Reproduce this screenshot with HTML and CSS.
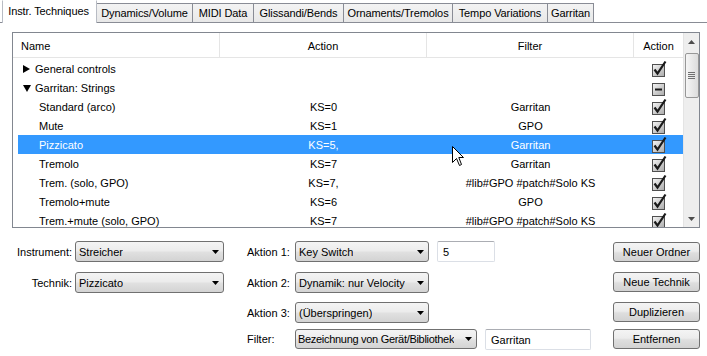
FILE: index.html
```html
<!DOCTYPE html>
<html>
<head>
<meta charset="utf-8">
<link rel="stylesheet" href="styles.css">
</head>
<body>
<svg class="defs" width="0" height="0">
  <defs>
    <linearGradient id="boxg" x1="0" y1="0" x2="1" y2="1">
      <stop offset="0" stop-color="#f6f6f6"/>
      <stop offset="1" stop-color="#a9a9a9"/>
    </linearGradient>
    <symbol id="chk" viewBox="0 0 15 17">
      <rect x="0.5" y="4.5" width="12" height="12" fill="url(#boxg)" stroke="#505050"/>
      <path d="M2.5 9.5 L5.5 13.5 L13.5 1.5" fill="none" stroke="#1a1a1a" stroke-width="2.2"/>
    </symbol>
    <symbol id="mix" viewBox="0 0 15 17">
      <rect x="0.5" y="4.5" width="12" height="12" fill="url(#boxg)" stroke="#505050"/>
      <rect x="3" y="9.5" width="7" height="2" fill="#1a1a1a"/>
    </symbol>
    <symbol id="drop" viewBox="0 0 7 4">
      <path d="M0 0 H7 L3.5 4 Z" fill="#000"/>
    </symbol>
  </defs>
</svg>

<div class="tabs">
  <div class="tab active t-instr">Instr. Techniques</div>
  <div class="tab t-dyn">Dynamics/Volume</div>
  <div class="tab t-midi">MIDI Data</div>
  <div class="tab t-gliss">Glissandi/Bends</div>
  <div class="tab t-orn">Ornaments/Tremolos</div>
  <div class="tab t-tempo">Tempo Variations</div>
  <div class="tab t-garr">Garritan</div>
</div>

<div class="list">
  <div class="table">
    <div class="head">
      <div class="hc name">Name</div>
      <div class="hc">Action</div>
      <div class="hc">Filter</div>
      <div class="hc last">Action</div>
    </div>
    <div class="rows">
      <div class="row group">
        <div class="nm"><svg class="tri" width="8" height="8" viewBox="0 0 8 8"><path d="M0 0 L7 4 L0 8 Z" fill="#000"/></svg>General controls</div>
        <div></div><div></div>
        <div class="ck"><svg width="15" height="17"><use href="#chk"/></svg></div>
      </div>
      <div class="row group">
        <div class="nm"><svg class="tri" width="8" height="8" viewBox="0 0 8 8"><path d="M0 1 L8 1 L4 8 Z" fill="#000"/></svg>Garritan: Strings</div>
        <div></div><div></div>
        <div class="ck"><svg width="15" height="17"><use href="#mix"/></svg></div>
      </div>
      <div class="row">
        <div class="nm">Standard (arco)</div><div>KS=0</div><div>Garritan</div>
        <div class="ck"><svg width="15" height="17"><use href="#chk"/></svg></div>
      </div>
      <div class="row">
        <div class="nm">Mute</div><div>KS=1</div><div>GPO</div>
        <div class="ck"><svg width="15" height="17"><use href="#chk"/></svg></div>
      </div>
      <div class="row sel">
        <div class="nm">Pizzicato</div><div>KS=5,</div><div>Garritan</div>
        <div class="ck"><svg width="15" height="17"><use href="#chk"/></svg></div>
      </div>
      <div class="row">
        <div class="nm">Tremolo</div><div>KS=7</div><div>Garritan</div>
        <div class="ck"><svg width="15" height="17"><use href="#chk"/></svg></div>
      </div>
      <div class="row">
        <div class="nm">Trem. (solo, GPO)</div><div>KS=7,</div><div>#lib#GPO #patch#Solo KS</div>
        <div class="ck"><svg width="15" height="17"><use href="#chk"/></svg></div>
      </div>
      <div class="row">
        <div class="nm">Tremolo+mute</div><div>KS=6</div><div>GPO</div>
        <div class="ck"><svg width="15" height="17"><use href="#chk"/></svg></div>
      </div>
      <div class="row">
        <div class="nm">Trem.+mute (solo, GPO)</div><div>KS=7</div><div>#lib#GPO #patch#Solo KS</div>
        <div class="ck"><svg width="15" height="17"><use href="#chk"/></svg></div>
      </div>
    </div>
  </div>
  <div class="scroll">
    <div class="sbtn"><svg width="7" height="4" viewBox="0 0 7 4"><path d="M0 4 H7 L3.5 0 Z" fill="#4d4d4d"/></svg></div>
    <div class="thumb"><svg width="7" height="7" viewBox="0 0 7 7"><path d="M0 0.5 H7 M0 2.5 H7 M0 4.5 H7 M0 6.5 H7" stroke="#707070" stroke-width="1"/></svg></div>
    <div class="track"></div>
    <div class="sbtn"><svg width="7" height="4" viewBox="0 0 7 4"><path d="M0 0 H7 L3.5 4 Z" fill="#4d4d4d"/></svg></div>
  </div>
</div>

<div class="form">
  <div class="lbl r1">Instrument:</div>
  <div class="combo c2 r1"><span>Streicher</span><svg width="7" height="4"><use href="#drop"/></svg></div>
  <div class="mlbl r1">Aktion 1:</div>
  <div class="mid r1">
    <div class="combo w134"><span>Key Switch</span><svg width="7" height="4"><use href="#drop"/></svg></div>
    <div class="input w58">5</div>
  </div>
  <div class="btn r1">Neuer Ordner</div>

  <div class="lbl r2">Technik:</div>
  <div class="combo c2 r2"><span>Pizzicato</span><svg width="7" height="4"><use href="#drop"/></svg></div>
  <div class="mlbl r2">Aktion 2:</div>
  <div class="mid r2">
    <div class="combo w134"><span>Dynamik: nur Velocity</span><svg width="7" height="4"><use href="#drop"/></svg></div>
  </div>
  <div class="btn r2">Neue Technik</div>

  <div class="mlbl r3">Aktion 3:</div>
  <div class="mid r3">
    <div class="combo w134"><span>(Überspringen)</span><svg width="7" height="4"><use href="#drop"/></svg></div>
  </div>
  <div class="btn r3">Duplizieren</div>

  <div class="mlbl r4">Filter:</div>
  <div class="mid r4">
    <div class="combo w182 h20 tight"><span>Bezeichnung von Gerät/Bibliothek</span><svg width="7" height="4"><use href="#drop"/></svg></div>
    <div class="input w106 h20">Garritan</div>
  </div>
  <div class="btn r4">Entfernen</div>
</div>

<svg class="cursor" width="13" height="21" viewBox="0 0 13 21">
  <path d="M0.5 0.5 L0.5 16.5 L4.5 12.5 L7.5 19.5 L9.5 18.5 L6.8 11.5 L11.5 11.5 Z" fill="#fff" stroke="#000" stroke-width="1" stroke-linejoin="miter"/>
</svg>
</body>
</html>
```

FILE: styles.css
```css
* { box-sizing: border-box; }

html, body {
  margin: 0;
  background: #ffffff;
}

body {
  width: 707px;
  height: 356px;
  overflow: hidden;
  position: relative;
  font: 11px "Liberation Sans", Arial, sans-serif;
  color: #000;
}

.defs { position: absolute; }

/* Tabs */
.tabs {
  display: flex;
  align-items: flex-end;
  height: 23px;
  padding-left: 2px;
  border-bottom: 1px solid #898c95;
}

.tab {
  height: 19px;
  padding: 0 0 1px;
  display: flex;
  align-items: center;
  justify-content: center;
  border: 1px solid #898c95;
  border-bottom: none;
  background: linear-gradient(#f3f3f3, #e8e8e8);
  margin-left: -1px;
  white-space: nowrap;
  letter-spacing: -0.1px;
}

.tab.active {
  height: 23px;
  margin-bottom: -1px;
  margin-left: 0;
  padding: 0 2px 2px 0;
  background: #fff;
  border-color: #b8bcc4;
  border-top-color: #fff;
  z-index: 1;
}

.t-instr { width: 95px; }
.t-dyn { width: 97px; }
.t-midi { width: 62px; }
.t-gliss { width: 91px; }
.t-orn { width: 110px; }
.t-tempo { width: 96px; }
.t-garr { width: 47px; }

/* List view */
.list {
  margin: 9px 0 0 12px;
  width: 688px;
  height: 196px;
  border: 1px solid #828790;
  display: flex;
}

.table {
  width: 670px;
  overflow: hidden;
}

.head {
  display: grid;
  grid-template-columns: 207px 207px 207px 49px;
  height: 25px;
  border-bottom: 1px solid #e5e5e5;
}

.hc {
  display: flex;
  align-items: center;
  justify-content: center;
  padding-top: 2px;
  border-right: 1px solid #e5e5e5;
}

.hc.name { justify-content: flex-start; padding-left: 8px; }
.hc.last { border-right: none; }

.rows { padding-top: 1px; }

.row {
  display: grid;
  grid-template-columns: 202px 207px 207px 49px;
  height: 19px;
  margin-left: 5px;
  align-items: center;
  white-space: nowrap;
}

.row > div { text-align: center; }

.row .nm {
  text-align: left;
  padding-left: 21px;
  display: flex;
  align-items: center;
}

.row.group .nm { padding-left: 5px; }
.tri { margin-right: 4px; }

.row.sel { background: #3399ff; color: #fff; }

.row .ck {
  display: flex;
  justify-content: center;
  padding-left: 2px;
  height: 19px;
  align-items: flex-start;
  padding-top: 1px;
}

/* Scrollbar */
.scroll {
  width: 16px;
  display: flex;
  flex-direction: column;
  align-items: center;
  background: #eeeeee;
  border-left: 1px solid #e4e4e4;
}

.sbtn {
  height: 17px;
  width: 15px;
  display: flex;
  align-items: center;
  justify-content: center;
}

.thumb {
  margin-top: 3px;
  width: 14px;
  height: 45px;
  border: 1px solid #979797;
  border-radius: 2px;
  background: linear-gradient(90deg, #f5f5f5, #e6e6e6 60%, #dcdcdc);
  display: flex;
  align-items: center;
  justify-content: center;
}

.track { flex: 1; }

/* Form */
.form {
  display: grid;
  grid-template-columns: 63px 149px 23px 48px 318px 87px;
  grid-template-rows: 31px 30px 27px 20px;
  margin: 13px 0 0 12px;
  width: 688px;
}

.r1 { grid-row: 1; }
.r2 { grid-row: 2; }
.r3 { grid-row: 3; }
.r4 { grid-row: 4; }

.lbl {
  grid-column: 1;
  height: 21px;
  display: flex;
  align-items: center;
  justify-content: flex-end;
  padding-right: 3px;
}

.c2 { grid-column: 2; }

.mlbl {
  grid-column: 4;
  height: 21px;
  display: flex;
  align-items: center;
}

.mlbl.r4 { height: 20px; }

.mid {
  grid-column: 5;
  display: flex;
  align-items: flex-start;
  gap: 8px;
}

.combo {
  height: 21px;
  border: 1px solid #707070;
  border-radius: 3px;
  background: linear-gradient(#f4f4f4 0%, #ececec 45%, #e0e0e0 55%, #d3d3d3 100%);
  display: flex;
  align-items: center;
  justify-content: space-between;
  padding: 0 4px 0 3px;
  white-space: nowrap;
  align-self: start;
}

.combo span { overflow: hidden; }
.combo svg { flex: none; margin-left: 4px; }
.combo.tight { letter-spacing: -0.3px; padding-left: 2px; }
.combo.tight svg { margin-left: 2px; }

.w134 { width: 134px; }
.w182 { width: 182px; }
.h20 { height: 20px; }

.input {
  height: 21px;
  border: 1px solid #dbdfe6;
  border-top-color: #abadb3;
  border-radius: 2px;
  background: #fff;
  display: flex;
  align-items: center;
  padding-left: 5px;
}

.w58 { width: 58px; }
.w106 { width: 106px; }

.btn {
  grid-column: 6;
  height: 20px;
  border: 1px solid #707070;
  border-radius: 3px;
  background: linear-gradient(#f4f4f4 0%, #ececec 45%, #dedede 55%, #d2d2d2 100%);
  display: flex;
  align-items: center;
  justify-content: center;
  align-self: start;
}

.btn.r1 { margin-top: 1px; }

.cursor {
  position: absolute;
  left: 452px;
  top: 146px;
}
```
